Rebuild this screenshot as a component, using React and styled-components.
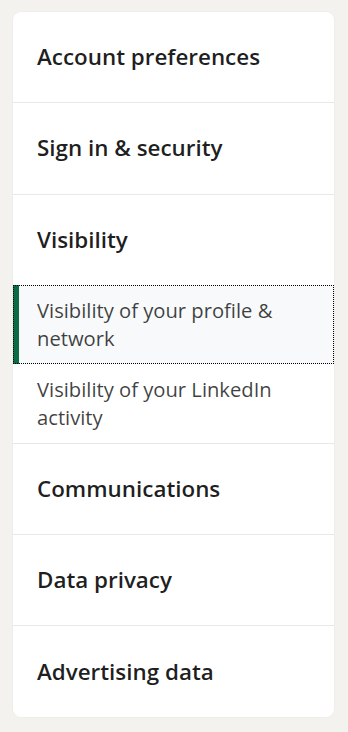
import styled, { createGlobalStyle } from "styled-components";

const Global = createGlobalStyle`
  html, body {
    margin: 0;
    padding: 0;
    background: #f4f2ee;
    font-family: "Open Sans", "Noto Sans", sans-serif;
  }
`

const Page = styled.div`
  padding: 12px 14px 16px 13px;
`

const Card = styled.nav`
  background: #fff;
  border-radius: 8px;
  overflow: hidden;
  box-shadow: 0 0 0 1px rgba(0,0,0,0.02);
`

const Section = styled.div`
  & + & {
    border-top: 1px solid #e8e8e6;
  }
`

const Heading = styled.a`
  display: flex;
  align-items: center;
  height: 90.3px;
  padding: 0 24px;
  font-size: 22.4px;
  font-weight: 600;
  line-height: 28px;
  color: rgba(0,0,0,0.88);
  text-decoration: none;
`

const SubItem = styled.a`
  display: block;
  padding: 11.5px 24px 11.5px ${p => p.active ? "18px" : "24px"};
  font-size: 20.2px;
  line-height: 28px;
  color: rgba(0,0,0,0.75);
  text-decoration: none;
  background: ${p => p.active ? "#f7f9fa" : "transparent"};
  border-left: ${p => p.active ? "6px solid #0a6b45" : "none"};
  outline: ${p => p.active ? "1px dotted #000" : "none"};
  outline-offset: -1px;
`

const sections = [
  { title: "Account preferences" },
  { title: "Sign in & security" },
  {
    title: "Visibility",
    items: ["Visibility of your profile & network", "Visibility of your LinkedIn activity"],
  },
  { title: "Communications" },
  { title: "Data privacy" },
  { title: "Advertising data" },
]

export default function App() {
  return (
    <Page>
      <Global />
      <Card>
        {sections.map((s) => (
          <Section key={s.title}>
            <Heading href="#">{s.title}</Heading>
            {s.items && s.items.map((it, i) => (
              <SubItem key={it} href="#" active={i === 0}>{it}</SubItem>
            ))}
          </Section>
        ))}
      </Card>
    </Page>
  )
}
